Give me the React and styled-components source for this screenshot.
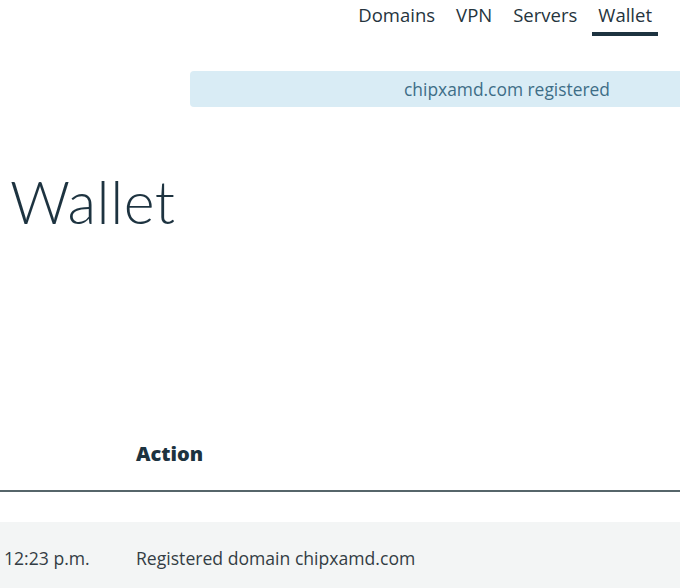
import React from 'react'
import styled, { createGlobalStyle } from 'styled-components'

const GlobalStyle = createGlobalStyle`
  html, body {
    margin: 0;
    padding: 0;
    background: #ffffff;
    overflow: hidden;
  }
  body {
    font-family: 'Open Sans', 'Liberation Sans', sans-serif;
    color: #1d3340;
  }
`

const Page = styled.div`
  width: 680px;
  height: 588px;
  overflow: hidden;
  position: relative;
`

const Nav = styled.nav`
  height: 44px;
  display: flex;
  justify-content: flex-end;
  align-items: flex-start;
  padding-right: 22px;
`

const NavList = styled.ul`
  list-style: none;
  margin: 0;
  padding: 0;
  display: flex;
`

const NavItem = styled.li`
  font-size: 18.5px;
  line-height: 20px;
  color: #25343d;
  padding: 5px 6px 0;
  margin-left: 9px;
  height: 27px;
  box-sizing: content-box;
  border-bottom: 4px solid ${(p) => (p.active ? '#1d3340' : 'transparent')};
`

const AlertRow = styled.div`
  display: flex;
  margin-top: 27px;
  padding-left: 190px;
`

const Alert = styled.div`
  flex: 0 0 634px;
  height: 36px;
  background: #d9ecf5;
  border-radius: 4px;
  display: flex;
  align-items: center;
  justify-content: center;
  font-size: 17.4px;
  color: #3e6e87;
`

const Title = styled.h1`
  margin: 60px 0 0 10px;
  font-family: 'Lato', 'Open Sans', sans-serif;
  font-weight: 300;
  font-size: 59px;
  line-height: 70px;
  letter-spacing: 0.5px;
  color: #1d3340;
`

const Table = styled.table`
  margin-top: 203px;
  width: 100%;
  border-collapse: collapse;
`

const HeadCell = styled.th`
  text-align: left;
  font-weight: 800;
  font-size: 20px;
  color: #1d3340;
  padding: 0 0 23px 0;
  width: ${(p) => p.w || 'auto'};
  border-bottom: 2px solid #56656a;
  vertical-align: bottom;
`

const Spacer = styled.tr`
  height: 31px;
`

const Row = styled.tr`
  background: #f3f5f5;
  height: 76px;
`

const Cell = styled.td`
  font-size: 17.6px;
  color: #333d44;
  padding: 0 0 4px ${(p) => p.pad || '0'};
  vertical-align: middle;
`

export default function App() {
  return (
    <Page>
      <GlobalStyle />
      <Nav>
        <NavList>
          <NavItem>Domains</NavItem>
          <NavItem>VPN</NavItem>
          <NavItem>Servers</NavItem>
          <NavItem active>Wallet</NavItem>
        </NavList>
      </Nav>
      <AlertRow>
        <Alert>chipxamd.com registered</Alert>
      </AlertRow>
      <Title>Wallet</Title>
      <Table>
        <thead>
          <tr>
            <HeadCell w="136px"></HeadCell>
            <HeadCell>Action</HeadCell>
          </tr>
        </thead>
        <tbody>
          <Spacer />
          <Row>
            <Cell pad="4px">12:23 p.m.</Cell>
            <Cell>Registered domain chipxamd.com</Cell>
          </Row>
        </tbody>
      </Table>
    </Page>
  )
}
